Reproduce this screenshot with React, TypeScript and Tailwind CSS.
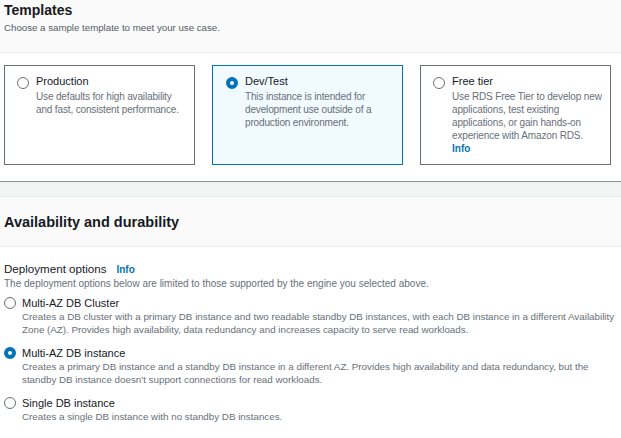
import React from "react";

type Card = { title: string; lines: string[]; info?: boolean; selected?: boolean };

const cards: Card[] = [
  {
    title: "Production",
    lines: ["Use defaults for high availability", "and fast, consistent performance."],
  },
  {
    title: "Dev/Test",
    selected: true,
    lines: ["This instance is intended for", "development use outside of a", "production environment."],
  },
  {
    title: "Free tier",
    info: true,
    lines: [
      "Use RDS Free Tier to develop new",
      "applications, test existing",
      "applications, or gain hands-on",
      "experience with Amazon RDS.",
    ],
  },
];

const options = [
  {
    label: "Multi-AZ DB Cluster",
    desc: "Creates a DB cluster with a primary DB instance and two readable standby DB instances, with each DB instance in a different Availability Zone (AZ). Provides high availability, data redundancy and increases capacity to serve read workloads.",
  },
  {
    label: "Multi-AZ DB instance",
    selected: true,
    desc: "Creates a primary DB instance and a standby DB instance in a different AZ. Provides high availability and data redundancy, but the standby DB instance doesn't support connections for read workloads.",
  },
  {
    label: "Single DB instance",
    desc: "Creates a single DB instance with no standby DB instances.",
  },
];

function Radio({ checked }: { checked?: boolean }) {
  return checked ? (
    <span className="block w-[12px] h-[12px] rounded-full border-[4px] border-[#0073bb] bg-white shrink-0" />
  ) : (
    <span className="block w-[12px] h-[12px] rounded-full border border-[#687078] bg-white shrink-0" />
  );
}

export default function App() {
  return (
    <div className="w-[621px] h-[438px] overflow-hidden bg-white text-[#16191f] font-['Liberation_Sans',Arial,sans-serif]">
      {/* Templates header */}
      <div className="h-[53px] bg-[#fafafa] border-b border-[#eaeded] px-[4px]">
        <h2 className="text-[14px] font-bold leading-[20px]">Templates</h2>
        <p className="mt-[1px] text-[9.7px] leading-[14px] text-[#545b64]">
          Choose a sample template to meet your use case.
        </p>
      </div>

      <div className="grid grid-cols-3 gap-[17px] pl-[4px] pr-[10px] pt-[12px] pb-[16px]">
        {cards.map((c) => (
          <div
            key={c.title}
            className={
              c.selected
                ? "h-[100px] border border-[#0073bb] bg-[#f1faff] pl-[13px] pt-[8px] flex gap-[7px]"
                : "h-[100px] border border-[#687078] bg-white pl-[12px] pt-[8px] flex gap-[7px]"
            }
          >
            <div className="pt-[3px]">
              <Radio checked={c.selected} />
            </div>
            <div>
              <div className="text-[11px] leading-[14px]">{c.title}</div>
              <div className="mt-[2px] text-[10px] leading-[13px] tracking-[-0.15px] text-[#687078]">
                {c.lines.map((l) => (
                  <div key={l} className="whitespace-nowrap">{l}</div>
                ))}
                {c.info && <div className="font-bold text-[#0073bb] tracking-normal">Info</div>}
              </div>
            </div>
          </div>
        ))}
      </div>

      {/* Availability and durability */}
      <div className="border-t border-[#879596] h-[16px] bg-[#f2f3f3] border-b border-b-[#eaeded]" />
      <div className="h-[50px] bg-[#fafafa] border-b border-[#eaeded] px-[4px] flex items-center">
        <h2 className="text-[14.5px] font-bold leading-[20px]">Availability and durability</h2>
      </div>

      <div className="pl-[4px] pr-[6px] pt-[15px]">
        <div className="flex items-baseline gap-[10px] leading-[14px]">
          <span className="text-[11.6px]">Deployment options</span>
          <span className="text-[10px] font-bold text-[#0073bb]">Info</span>
        </div>
        <p className="text-[10px] leading-[13px] text-[#687078]">
          The deployment options below are limited to those supported by the engine you selected above.
        </p>

        <div className="mt-[6px] flex flex-col gap-[10px]">
          {options.map((o) => (
            <div key={o.label}>
              <div className="flex items-center gap-[6px]">
                <Radio checked={o.selected} />
                <span className="text-[11px] leading-[14px]">{o.label}</span>
              </div>
              <p className="pl-[18px] text-[9.8px] leading-[13px] text-[#687078]">{o.desc}</p>
            </div>
          ))}
        </div>
      </div>
    </div>
  );
}
